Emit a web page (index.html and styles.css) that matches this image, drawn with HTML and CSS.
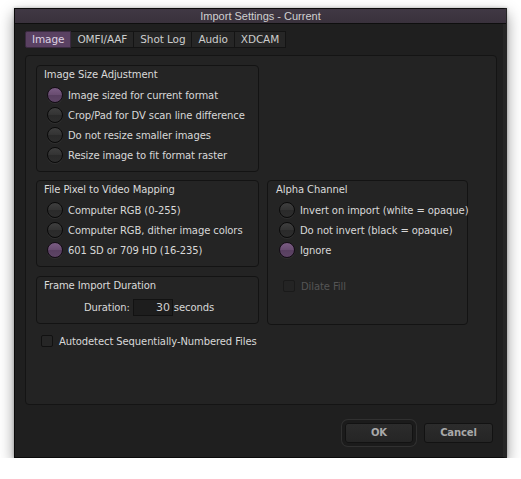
FILE: index.html
```html
<!DOCTYPE html>
<html>
<head>
<meta charset="utf-8">
<link rel="stylesheet" href="styles.css">
</head>
<body>
<div class="window">
  <div class="titlebar">Import Settings - Current</div>
  <div class="tabs">
    <div class="tab active">Image</div>
    <div class="tab">OMFI/AAF</div>
    <div class="tab">Shot Log</div>
    <div class="tab">Audio</div>
    <div class="tab">XDCAM</div>
  </div>
  <div class="panel">
    <div class="grid">
      <div class="group g-size">
        <div class="gtitle">Image Size Adjustment</div>
        <div class="opt"><span class="radio on"></span>Image sized for current format</div>
        <div class="opt"><span class="radio"></span>Crop/Pad for DV scan line difference</div>
        <div class="opt"><span class="radio"></span>Do not resize smaller images</div>
        <div class="opt"><span class="radio"></span>Resize image to fit format raster</div>
      </div>
      <div class="group g-pixel">
        <div class="gtitle">File Pixel to Video Mapping</div>
        <div class="opt"><span class="radio"></span>Computer RGB (0-255)</div>
        <div class="opt"><span class="radio"></span>Computer RGB, dither image colors</div>
        <div class="opt"><span class="radio on"></span>601 SD or 709 HD (16-235)</div>
      </div>
      <div class="group g-alpha">
        <div class="gtitle">Alpha Channel</div>
        <div class="opt"><span class="radio"></span>Invert on import (white = opaque)</div>
        <div class="opt"><span class="radio"></span>Do not invert (black = opaque)</div>
        <div class="opt"><span class="radio on"></span>Ignore</div>
        <div class="check disabled dilate"><span class="box"></span>Dilate Fill</div>
      </div>
      <div class="group g-frame">
        <div class="gtitle">Frame Import Duration</div>
        <div class="duration">
          <span class="dlabel">Duration:</span>
          <span class="field">30</span>
          <span class="dunit">seconds</span>
        </div>
      </div>
    </div>
    <div class="check autodetect"><span class="box"></span>Autodetect Sequentially-Numbered Files</div>
  </div>
  <div class="buttons">
    <div class="btn default">OK</div>
    <div class="btn">Cancel</div>
  </div>
</div>
</body>
</html>
```

FILE: styles.css
```css
html, body {
  margin: 0;
  padding: 0;
  background: #ffffff;
}
body {
  font-family: "DejaVu Sans", "Liberation Sans", sans-serif;
  font-size: 10px;
  letter-spacing: -0.1px;
  color: #d8d8d8;
}
.window {
  box-sizing: border-box;
  margin: 8px 0 0 14px;
  width: 493px;
  height: 450px;
  background: #1f1f1f;
  border: 1px solid #0b0b0b;
  border-right: 4px solid #262626;
  box-shadow: 0 6px 14px rgba(0, 0, 0, 0.42), 0 0 3px rgba(0, 0, 0, 0.25);
}
.titlebar {
  height: 14px;
  line-height: 14px;
  border-bottom: 1px solid #0e0e0e;
  background: linear-gradient(#403844, #39313c);
  text-align: center;
  font-family: "Liberation Sans", Arial, sans-serif;
  font-size: 11px;
  letter-spacing: 0;
  color: #d0d0d0;
  margin-right: -3px;
}
.tabs {
  display: flex;
  margin: 7px 0 0 10px;
  height: 17px;
}
.tab {
  box-sizing: border-box;
  height: 17px;
  line-height: 15px;
  padding: 0 6px;
  background: #262626;
  border: 1px solid #141414;
  border-left: none;
  color: #cdcdcd;
  font-size: 10.5px;
}
.tab:first-child {
  border-left: 1px solid #141414;
}
.tab.active {
  background: #5a4162;
  border-color: #3a2a40;
  color: #ddd2e2;
  border-radius: 2px 0 0 2px;
}
.panel {
  box-sizing: border-box;
  margin: 7px 0 0 10px;
  width: 472px;
  height: 350px;
  padding: 9px 0 0 10px;
  background: #232323;
  border: 1px solid #141414;
  border-radius: 4px;
}
.grid {
  display: grid;
  grid-template-columns: 223px 201px;
  column-gap: 8px;
  row-gap: 8px;
  align-items: start;
}
.group {
  box-sizing: border-box;
  border: 1px solid #131313;
  border-radius: 4px;
  padding: 2px 8px 6px 7px;
  background: #242424;
}
.g-size { grid-column: 1; grid-row: 1; }
.g-pixel { grid-column: 1; grid-row: 2; }
.g-alpha { grid-column: 2; grid-row: 2 / span 2; height: 145px; padding-left: 8px; }
.g-frame { grid-column: 1; grid-row: 3; padding-bottom: 7px; }
.gtitle {
  height: 14px;
  line-height: 14px;
  margin-bottom: 3px;
  color: #dadada;
}
.opt {
  display: flex;
  align-items: center;
  height: 20px;
  padding-left: 3px;
  gap: 5px;
  white-space: nowrap;
}
.radio {
  box-sizing: border-box;
  flex: none;
  width: 16px;
  height: 16px;
  border-radius: 50%;
  border: 1px solid #0a0a0a;
  background: linear-gradient(#3f3f3f 0%, #333333 50%, #2a2a2a 51%, #2d2d2d 100%);
  box-shadow: 0 1px 0 rgba(255, 255, 255, 0.05);
}
.radio.on {
  background: linear-gradient(#7a5c83 0%, #684c70 50%, #583f60 51%, #5e4566 100%);
  border-color: #140c16;
}
.check {
  display: flex;
  align-items: center;
  gap: 6px;
  height: 14px;
  white-space: nowrap;
}
.box {
  box-sizing: border-box;
  flex: none;
  width: 12px;
  height: 12px;
  border: 1px solid #111111;
  border-radius: 2px;
  background: #262626;
}
.check.disabled {
  color: #555555;
}
.check.disabled .box {
  border-color: #1a1a1a;
  background: #242424;
}
.dilate {
  margin: 19px 0 0 7px;
}
.autodetect {
  margin: 9px 0 0 5px;
}
.duration {
  display: flex;
  align-items: center;
  justify-content: center;
  height: 18px;
  margin-top: 5px;
  padding-left: 4px;
}
.dlabel {
  margin-right: 3px;
}
.field {
  box-sizing: border-box;
  width: 40px;
  height: 17px;
  line-height: 15px;
  border: 1px solid #121212;
  background: #1d1d1d;
  text-align: right;
  padding-right: 2px;
  color: #d0d0d0;
  font-size: 11px;
}
.dunit {
  margin-left: 1px;
}
.buttons {
  display: flex;
  justify-content: flex-end;
  gap: 11px;
  margin-top: 18px;
  padding-right: 10px;
}
.btn {
  box-sizing: border-box;
  width: 69px;
  height: 20px;
  line-height: 18px;
  text-align: center;
  font-weight: bold;
  color: #a9a9a9;
  background: linear-gradient(#2c2c2c, #252525);
  border: 1px solid #121212;
  border-radius: 3px;
}
.btn.default {
  width: 68px;
  box-shadow: 0 0 0 3px #1b1b1b, 0 0 0 4px #303030;
}
```
